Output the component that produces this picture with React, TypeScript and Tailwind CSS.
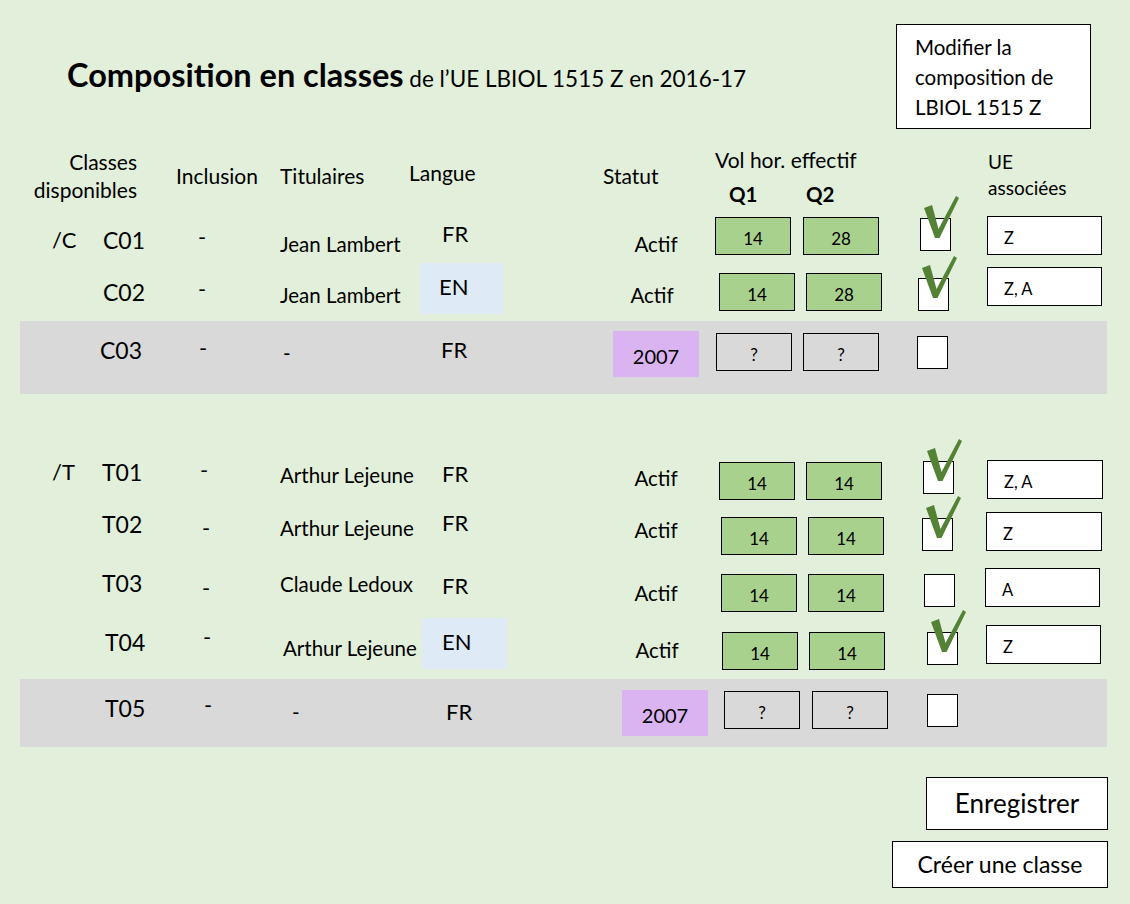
import React from "react";

type Cls = {
  code: string;
  dash: string;
  tit: string;
  lang: string;
  statut: string;
  q1: string;
  q2: string;
  cb: string;
  ue?: string;
};

type ClassRow = {
  prefix?: string;
  code: string;
  tit: string;
  lang: string;
  en?: boolean;
  statut: string;
  q1: string;
  q2: string;
  checked: boolean;
  ue?: string;
  band?: boolean;
  h: string;
  c: Cls;
};

const groupC: ClassRow[] = [
  {
    prefix: "/C",
    code: "C01",
    tit: "Jean Lambert",
    lang: "FR",
    statut: "Actif",
    q1: "14",
    q2: "28",
    checked: true,
    ue: "Z",
    h: "h-[48px]",
    c: {
      code: "mt-[13px] ml-[3px]",
      dash: "mt-[10px] ml-[8px]",
      tit: "mt-[17px] ml-[10px]",
      lang: "mt-[7px] pl-[22px]",
      statut: "mt-[17px] ml-[106px]",
      q1: "mt-[2px] ml-[16px]",
      q2: "mt-[2px] ml-[12px]",
      cb: "mt-[3px] ml-[41px]",
      ue: "mt-[1px] ml-[36px] w-[115px]",
    },
  },
  {
    code: "C02",
    tit: "Jean Lambert",
    lang: "EN",
    en: true,
    statut: "Actif",
    q1: "14",
    q2: "28",
    checked: true,
    ue: "Z, A",
    h: "h-[58px]",
    c: {
      code: "mt-[17px] ml-[3px]",
      dash: "mt-[14px] ml-[8px]",
      tit: "mt-[20px] ml-[10px]",
      lang: "w-[83px] pt-[12px] pl-[19px]",
      statut: "mt-[20px] ml-[102px]",
      q1: "mt-[10px] ml-[24px]",
      q2: "mt-[10px] ml-[11px]",
      cb: "mt-[15px] ml-[36px]",
      ue: "mt-[4px] ml-[38px] w-[115px]",
    },
  },
  {
    code: "C03",
    tit: "-",
    lang: "FR",
    statut: "2007",
    q1: "?",
    q2: "?",
    checked: false,
    band: true,
    h: "h-[73px]",
    c: {
      code: "mt-[17px] ml-0",
      dash: "mt-[15px] ml-[9px]",
      tit: "mt-[20px] ml-[13px]",
      lang: "mt-[17px] pl-[21px]",
      statut: "mt-[10px] ml-[106px]",
      q1: "mt-[12px] ml-[17px]",
      q2: "mt-[12px] ml-[11px]",
      cb: "mt-[15px] ml-[38px]",
    },
  },
];

const groupT: ClassRow[] = [
  {
    prefix: "/T",
    code: "T01",
    tit: "Arthur Lejeune",
    lang: "FR",
    statut: "Actif",
    q1: "14",
    q2: "14",
    checked: true,
    ue: "Z, A",
    h: "h-[52px]",
    c: {
      code: "mt-[2px] ml-[2px]",
      dash: "mt-0 ml-[10px]",
      tit: "mt-[5px] ml-[10px]",
      lang: "mt-[4px] pl-[22px]",
      statut: "mt-[8px] ml-[106px]",
      q1: "mt-[4px] ml-[20px]",
      q2: "mt-[4px] ml-[11px]",
      cb: "mt-[3px] ml-[41px]",
      ue: "mt-[2px] ml-[33px] w-[116px]",
    },
  },
  {
    code: "T02",
    tit: "Arthur Lejeune",
    lang: "FR",
    statut: "Actif",
    q1: "14",
    q2: "14",
    checked: true,
    ue: "Z",
    h: "h-[56px]",
    c: {
      code: "mt-[2px] ml-[2px]",
      dash: "mt-[6px] ml-[12px]",
      tit: "mt-[6px] ml-[10px]",
      lang: "mt-[1px] pl-[22px]",
      statut: "mt-[8px] ml-[106px]",
      q1: "mt-[7px] ml-[22px]",
      q2: "mt-[7px] ml-[11px]",
      cb: "mt-[8px] ml-[38px]",
      ue: "mt-[2px] ml-[33px] w-[116px]",
    },
  },
  {
    code: "T03",
    tit: "Claude Ledoux",
    lang: "FR",
    statut: "Actif",
    q1: "14",
    q2: "14",
    checked: false,
    ue: "A",
    h: "h-[52px]",
    c: {
      code: "mt-[5px] ml-[2px]",
      dash: "mt-[10px] ml-[12px]",
      tit: "mt-[6px] ml-[10px]",
      lang: "mt-[8px] pl-[22px]",
      statut: "mt-[15px] ml-[106px]",
      q1: "mt-[8px] ml-[22px]",
      q2: "mt-[8px] ml-[11px]",
      cb: "mt-[8px] ml-[40px]",
      ue: "mt-[2px] ml-[30px] w-[115px]",
    },
  },
  {
    code: "T04",
    tit: "Arthur Lejeune",
    lang: "EN",
    en: true,
    statut: "Actif",
    q1: "14",
    q2: "14",
    checked: true,
    ue: "Z",
    h: "h-[61px]",
    c: {
      code: "mt-[12px] ml-[5px]",
      dash: "mt-[7px] ml-[13px]",
      tit: "mt-[18px] ml-[13px]",
      lang: "ml-[2px] w-[85px] pt-[12px] pl-[20px]",
      statut: "mt-[20px] ml-[107px]",
      q1: "mt-[14px] ml-[22px]",
      q2: "mt-[14px] ml-[11px]",
      cb: "mt-[14px] ml-[42px]",
      ue: "mt-[7px] ml-[28px] w-[115px]",
    },
  },
  {
    code: "T05",
    tit: "-",
    lang: "FR",
    statut: "2007",
    q1: "?",
    q2: "?",
    checked: false,
    band: true,
    h: "h-[68px]",
    c: {
      code: "mt-[17px] ml-[5px]",
      dash: "mt-[14px] ml-[14px]",
      tit: "mt-[21px] ml-[22px]",
      lang: "mt-[21px] pl-[26px]",
      statut: "mt-[11px] ml-[115px]",
      q1: "mt-[12px] ml-[16px]",
      q2: "mt-[12px] ml-[12px]",
      cb: "mt-[15px] ml-[39px]",
    },
  },
];

// green tick drawn over the checkbox (thick left stroke, thin right one)
function Tick() {
  return (
    <svg
      className="absolute left-0 top-[-24px] overflow-visible"
      width="40"
      height="46"
      viewBox="0 0 40 46"
    >
      <polygon
        points="3,13 11,10 17.5,34 35,1 38,3 18.5,43 14,43"
        fill="#548235"
      />
    </svg>
  );
}

function HourBox({ value, cls, empty }: { value: string; cls: string; empty: boolean }) {
  return (
    <div
      className={`${cls} w-[76px] h-[38px] shrink-0 border-[1.5px] border-black flex items-center justify-center pt-[5px] text-[17px] ${
        empty ? "bg-[#d9d9d9]" : "bg-[#a9d18e]"
      }`}
    >
      {value}
    </div>
  );
}

function Row({ r }: { r: ClassRow }) {
  const pending = r.statut === "2007";
  return (
    <div className={`flex items-start ml-[20px] w-[1087px] ${r.h} ${r.band ? "bg-[#d9d9d9]" : ""}`}>
      <div className="w-[80px] shrink-0">
        {r.prefix && (
          <div className={`pl-[32px] text-[22px] leading-[24px] ${r.c.code.split(" ")[0]}`}>{r.prefix}</div>
        )}
      </div>
      <div className="w-[90px] shrink-0">
        <div className={`${r.c.code} text-[23px] leading-[24px]`}>{r.code}</div>
      </div>
      <div className="w-[80px] shrink-0">
        <div className={`${r.c.dash} text-[22px] leading-[24px]`}>-</div>
      </div>
      <div className="w-[150px] shrink-0">
        <div className={`${r.c.tit} text-[20.5px] leading-[24px] whitespace-nowrap`}>{r.tit}</div>
      </div>
      <div className="w-[87px] shrink-0">
        {r.en ? (
          <div className={`${r.c.lang} h-[51px] bg-[#deebf7] text-[22px] leading-[24px]`}>{r.lang}</div>
        ) : (
          <div className={`${r.c.lang} text-[22px] leading-[24px]`}>{r.lang}</div>
        )}
      </div>
      {pending ? (
        <div className={`${r.c.statut} w-[86px] h-[46px] shrink-0 bg-[#dab3f1] flex items-center justify-center pt-[3px] text-[20px]`}>
          {r.statut}
        </div>
      ) : (
        <div className={`${r.c.statut} w-[86px] shrink-0 text-center text-[20.5px] leading-[24px]`}>{r.statut}</div>
      )}
      <HourBox value={r.q1} cls={r.c.q1} empty={pending} />
      <HourBox value={r.q2} cls={r.c.q2} empty={pending} />
      <div className={`${r.c.cb} relative w-[31px] h-[33px] shrink-0 border-[1.5px] border-black bg-white`}>
        {r.checked && <Tick />}
      </div>
      {r.ue && (
        <div className={`${r.c.ue} h-[39px] shrink-0 border-[1.5px] border-black bg-white flex items-center pl-[16px] pt-[5px] text-[16.5px]`}>
          {r.ue}
        </div>
      )}
    </div>
  );
}

export default function App() {
  return (
    <div className="w-[1130px] h-[904px] overflow-hidden bg-[#e2efda] text-black font-['Lato','Open_Sans',sans-serif]">
      {/* title + action */}
      <div className="flex items-start h-[148px]">
        <h1 className="flex-1 pl-[67px] pt-[57px] leading-[36px] whitespace-nowrap">
          <span className="text-[32.5px] font-bold">Composition en classes</span>
          <span className="text-[22.5px]"> de l’UE LBIOL 1515 Z en 2016-17</span>
        </h1>
        <button className="mt-[24px] mr-[39px] w-[195px] h-[105px] shrink-0 border-[1.5px] border-black bg-white text-left pl-[18px] text-[20.5px] leading-[30px]">
          Modifier la
          <br />
          composition de
          <br />
          LBIOL 1515 Z
        </button>
      </div>

      {/* column headers */}
      <div className="flex items-start ml-[20px] h-[67px] text-[21px]">
        <div className="w-[117px] shrink-0 text-right leading-[28px]">
          Classes
          <br />
          disponibles
        </div>
        <div className="ml-[39px] w-[104px] shrink-0 mt-[14px] leading-[28px]">Inclusion</div>
        <div className="w-[129px] shrink-0 mt-[14px] leading-[28px]">Titulaires</div>
        <div className="w-[194px] shrink-0 mt-[11px] leading-[28px]">Langue</div>
        <div className="w-[112px] shrink-0 mt-[14px] leading-[28px]">Statut</div>
        <div className="w-[273px] shrink-0 leading-[24px]">
          <div>Vol hor. effectif</div>
          <div className="flex mt-[10px] pl-[14px] text-[20.5px] font-bold">
            <span className="w-[77px]">Q1</span>
            <span>Q2</span>
          </div>
        </div>
        <div className="mt-[1px] text-[19px] leading-[26px]">
          UE
          <br />
          associées
        </div>
      </div>

      {groupC.map((r) => (
        <Row key={r.code} r={r} />
      ))}

      <div className="h-[64px]" />

      {groupT.map((r) => (
        <Row key={r.code} r={r} />
      ))}

      {/* bottom actions */}
      <div className="flex flex-col items-end gap-[11px] mt-[30px] pr-[22px]">
        <button className="w-[182px] h-[53px] border-[1.5px] border-black bg-white text-[26px]">Enregistrer</button>
        <button className="w-[216px] h-[47px] border-[1.5px] border-black bg-white text-[23px]">Créer une classe</button>
      </div>
    </div>
  );
}
